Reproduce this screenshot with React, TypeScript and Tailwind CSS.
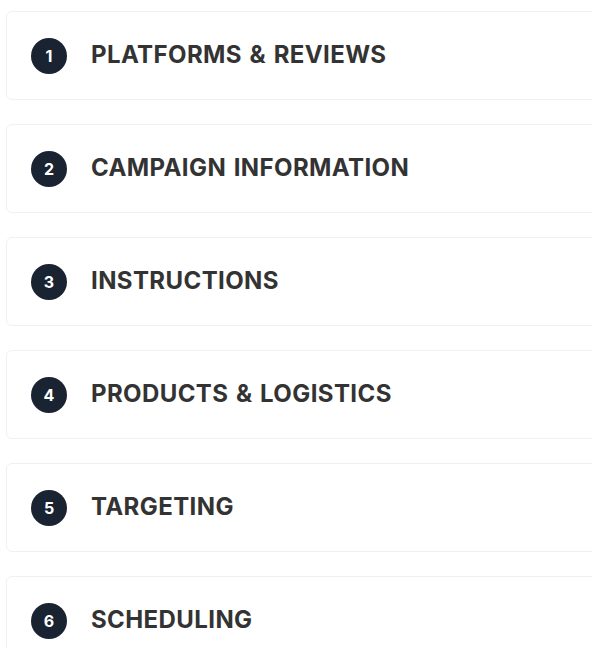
import React from "react";

const steps = [
  "PLATFORMS & REVIEWS",
  "CAMPAIGN INFORMATION",
  "INSTRUCTIONS",
  "PRODUCTS & LOGISTICS",
  "TARGETING",
  "SCHEDULING",
];

const StepCard = ({ n, title }: { n: number; title: string }) => (
  <div className="w-[620px] h-[89px] shrink-0 flex items-center gap-6 pl-6 bg-white border border-[#f0f0f0] rounded-md">
    <div className="w-9 h-9 rounded-full bg-[#1a2332] flex items-center justify-center text-white text-[16px] font-bold font-['Inter',sans-serif]">
      {n}
    </div>
    <h2 className="text-[24px] leading-8 -mt-[2px] font-bold tracking-[0.4px] [word-spacing:1.5px] text-[#333333] font-['Inter',sans-serif]">
      {title}
    </h2>
  </div>
);

const App = () => {
  return (
    <div className="w-[592px] h-[648px] overflow-hidden bg-white">
      <div className="flex flex-col gap-6 pl-[6px] pt-[11px]">
        {steps.map((t, i) => (
          <StepCard key={t} n={i + 1} title={t} />
        ))}
      </div>
    </div>
  );
};

export default App;
